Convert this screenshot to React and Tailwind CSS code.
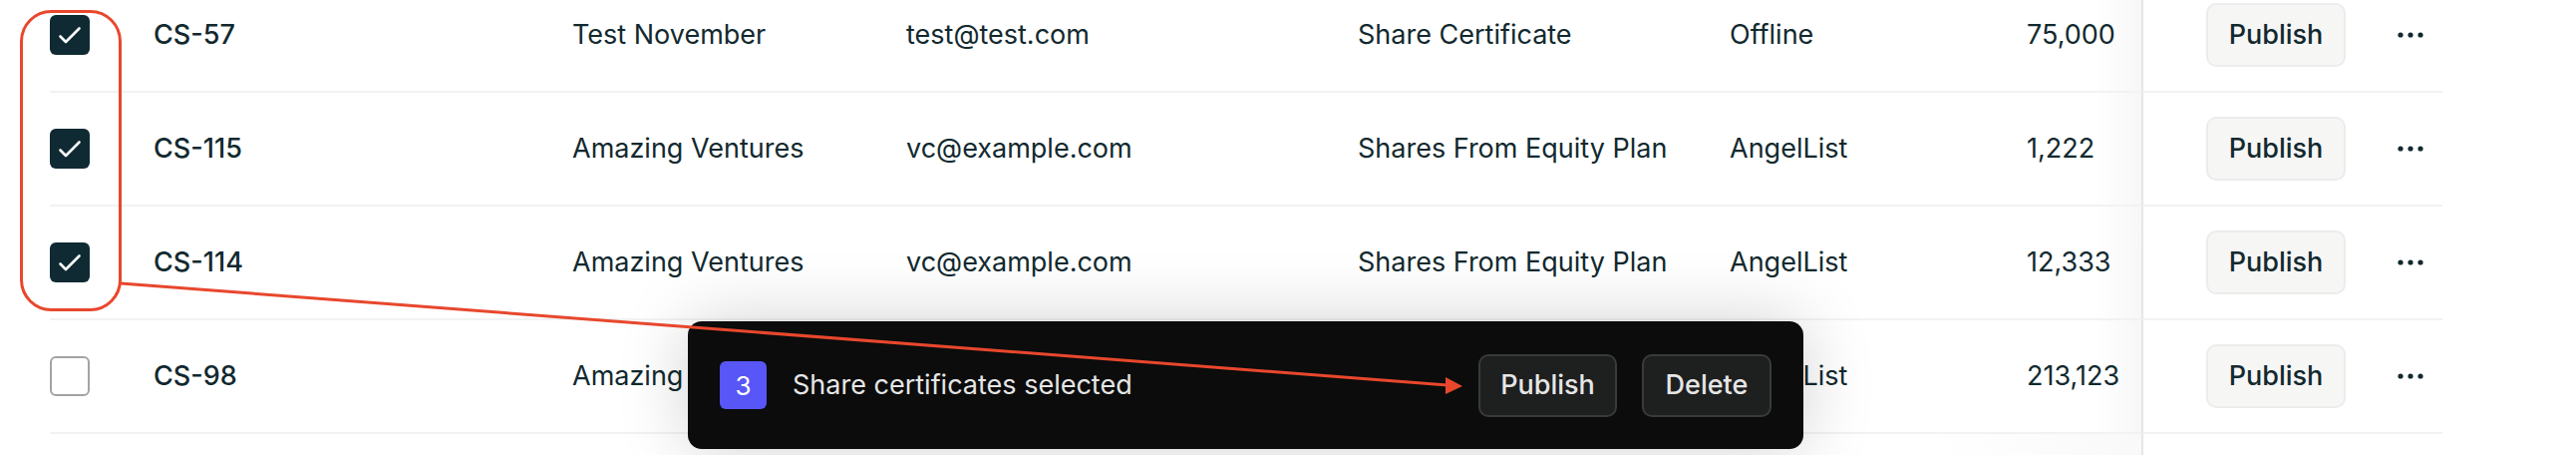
import React from 'react';

const rows = [
  { id: 'CS-57', name: 'Test November', email: 'test@test.com', type: 'Share Certificate', source: 'Offline', amount: '75,000', checked: true },
  { id: 'CS-115', name: 'Amazing Ventures', email: 'vc@example.com', type: 'Shares From Equity Plan', source: 'AngelList', amount: '1,222', checked: true },
  { id: 'CS-114', name: 'Amazing Ventures', email: 'vc@example.com', type: 'Shares From Equity Plan', source: 'AngelList', amount: '12,333', checked: true },
  { id: 'CS-98', name: 'Amazing Ventures', email: 'vc@example.com', type: 'Shares From Equity Plan', source: 'AngelList', amount: '213,123', checked: false },
];

function Checkbox({ checked }) {
  if (!checked) {
    return <div className="w-[40px] h-[40px] rounded-[6px] border-2 border-[#a3a3a3] bg-white" />;
  }
  return (
    <div className="w-[40px] h-[40px] rounded-[6px] bg-[#102a33] flex items-center justify-center">
      <svg width="40" height="40" viewBox="0 0 40 40" fill="none">
        <path d="M10.5 21.5 L16 27 L29.5 13.5" stroke="white" strokeWidth="2.6" strokeLinecap="round" strokeLinejoin="round" />
      </svg>
    </div>
  );
}

function Dots() {
  return (
    <svg width="26" height="6" viewBox="0 0 26 6" fill="#12292f">
      <circle cx="3" cy="3" r="2.6" />
      <circle cx="13" cy="3" r="2.6" />
      <circle cx="23" cy="3" r="2.6" />
    </svg>
  );
}

function Row({ row }) {
  return (
    <div className="flex items-stretch h-[114px] text-[27px] text-[#12292f]">
      <div className="flex flex-1 items-center border-b-2 border-[#f2f2f2]">
        <div className="w-[104px]">
          <Checkbox checked={row.checked} />
        </div>
        <div className="w-[420px] font-medium">{row.id}</div>
        <div className="w-[335px]">{row.name}</div>
        <div className="w-[453px]">{row.email}</div>
        <div className="w-[373px]">{row.type}</div>
        <div className="w-[298px]">{row.source}</div>
        <div className="flex-1 h-full flex items-center bg-gradient-to-r from-transparent from-60% to-[#f7f7f7]">{row.amount}</div>
      </div>
      <div className="w-[302px] flex items-center border-l-2 border-[#e6e6e6] border-b-2 border-b-[#f2f2f2] pl-[63px]">
        <button className="w-[140px] h-[64px] rounded-[10px] bg-[#f6f6f5] border-2 border-[#ececec] font-medium text-[#12292f]">
          Publish
        </button>
        <div className="ml-[52px] flex items-center">
          <Dots />
        </div>
      </div>
    </div>
  );
}

export default function App() {
  return (
    <div className="relative w-[2584px] h-[456px] overflow-hidden bg-white" style={{ fontFamily: 'Inter, "Noto Sans", sans-serif' }}>
      <div className="w-[2400px] ml-[50px] -mt-[21px]">
        {rows.map((r) => (
          <Row key={r.id} row={r} />
        ))}
        <div className="flex h-[60px]">
          <div className="flex-1 bg-gradient-to-r from-transparent from-90% to-[#f9f9f9]" />
          <div className="w-[302px] border-l-2 border-[#e6e6e6]" />
        </div>
      </div>

      <div className="absolute left-[690px] top-[322px] w-[1119px] h-[128px] rounded-[14px] bg-[#0b0c0b] flex items-center px-[32px] shadow-[0_0_70px_rgba(0,0,0,0.18)]">
        <div className="w-[47px] h-[48px] rounded-[6px] bg-[#5856f6] text-white text-[26px] flex items-center justify-center">3</div>
        <div className="ml-[26px] text-[27px] text-[#e6e6e6]">Share certificates selected</div>
        <div className="ml-auto flex gap-[25px]">
          <button className="w-[139px] h-[63px] rounded-[10px] bg-[#1e1f1f] border-2 border-[#393a3a] text-[27px] text-[#e6e6e6] font-medium">Publish</button>
          <button className="w-[130px] h-[63px] rounded-[10px] bg-[#1e1f1f] border-2 border-[#393a3a] text-[27px] text-[#e6e6e6] font-medium">Delete</button>
        </div>
      </div>

      <svg className="absolute left-0 top-0 pointer-events-none" width="2584" height="456" viewBox="0 0 2584 456" fill="none">
        <rect x="21.5" y="11.5" width="99" height="299" rx="30" stroke="#e8472d" strokeWidth="3" />
        <line x1="121" y1="284" x2="1452" y2="386" stroke="#e8472d" strokeWidth="3" />
        <polygon points="1467,387 1450,378 1450,395" fill="#e8472d" />
      </svg>
    </div>
  );
}
